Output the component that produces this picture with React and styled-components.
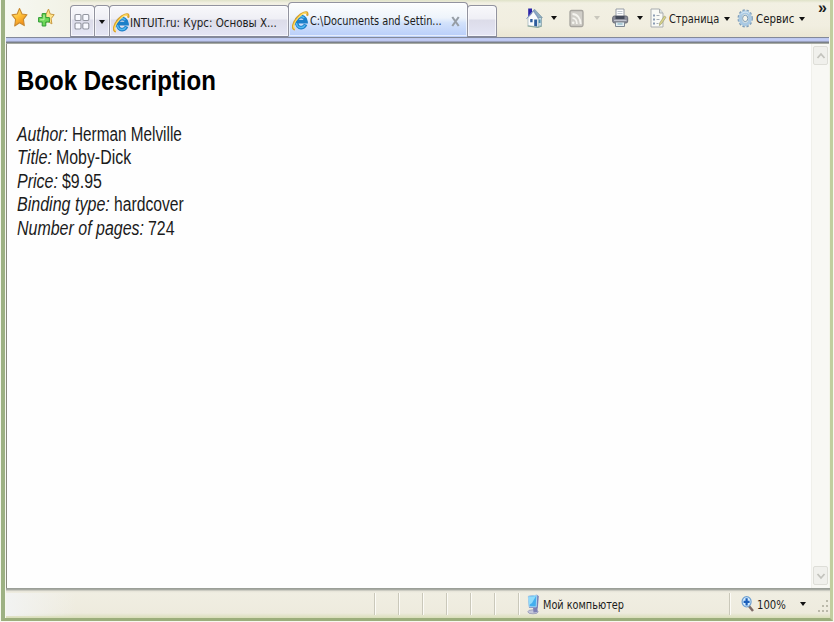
import React, { useLayoutEffect, useRef, useState } from 'react';
import styled, { createGlobalStyle } from 'styled-components';

const Global = createGlobalStyle`
  * { box-sizing: border-box; }
  body { margin: 0; background: #fff; overflow: hidden; }
`;

const Frame = styled.div`
  width: 834px; height: 622px; display: flex; flex-direction: column;
  padding: 0 1px 1px 1px; background: #f6f8ef;
  font-family: "DejaVu Sans Condensed", "DejaVu Sans", sans-serif; color: #1c1c20;
`;
const Border = styled.div`
  flex: 1; min-height: 0; display: flex; flex-direction: column;
  border-left: 4px solid #9db183; border-right: 3px solid #c1ce9f; border-bottom: 3px solid #9cae7c;
  padding-left: 1px;
`;
const CommandBar = styled.header`
  height: 37px; display: flex; flex: none;
  background: linear-gradient(#dfe2c8 0, #f2f0e3 3px, #f1eee0 26px, #ebe7d4);
`;
const Favorites = styled.div`
  width: 64px; display: flex; padding: 7px 0 0 5px; gap: 8px;
  background: linear-gradient(90deg, #f6f8f2, #f2f2e6);
  svg { flex: none; }
`;
const Tab = styled.div`
  width: ${p => p.$w}px; height: ${p => (p.$active ? 35 : 32)}px; margin: ${p => (p.$active ? 2 : 5)}px 0 0 ${p => (p.$overlap ? -1 : 0)}px;
  flex: none; display: flex; align-items: center; padding: ${p => p.$top || 0}px 0 0 ${p => p.$pad || 0}px;
  border: 1px solid #92939f; border-bottom-color: ${p => (p.$active ? '#bcd0f8' : '#85889a')};
  border-radius: 4px 4px 0 0;
  background: ${p => (p.$active
    ? 'linear-gradient(#fdfefe, #eef4fb 45%, #d3e2fb 60%, #b9cefa)'
    : 'linear-gradient(#f8f8fb, #efeff5 42%, #dcdce9 48%, #e5e6f5)')};
  box-shadow: inset 0 0 0 1px #ffffffa0;
`;
const Strip = styled.div`
  flex: none; height: 7px; margin-right: 1px;
  background: linear-gradient(#83899a 0 1px, #bec9ef 1px 2px, #c5cffa 3px, #b7c0e8 4px, #7e8594 5px, #777b7c 6px, #d7dbca 7px);
`;
const Commands = styled.div`
  flex: 1; display: flex; align-items: flex-start; padding: 8px 0 0 29px; position: relative;
  svg { flex: none; }
`;
const Gap = styled.i`flex: none; width: ${p => p.$w}px;`;
const Arrow = styled.i`
  flex: none; width: 0; height: 0; border: 3px solid transparent; border-bottom: 0;
  border-top: 4px solid ${p => (p.$dim ? '#c9c7bd' : '#111')}; margin-top: ${p => p.$top || 0}px;
`;
const More = styled.span`
  position: absolute; right: 3px; top: 0; font: bold 16px/16px "Liberation Sans", sans-serif;
`;
const Page = styled.main`
  flex: 1; min-height: 0; display: flex; background: #fefefe;
  border-left: 1px solid #888b7d;
`;
const Article = styled.article`
  flex: 1; padding: 21px 0 0 10px; font-family: "Liberation Sans", Arial, sans-serif;
`;
const Title = styled.h1`
  margin: 0 0 26px; height: 32px; font-size: 28px; line-height: 32px; color: #000;
`;
const Row = styled.div`
  height: 23.4px; line-height: 23.4px; font-size: 19.5px; display: flex; gap: 4px; color: #1b1b1b;
`;
const Label = styled.em`font-style: italic;`;
const ScrollTrack = styled.aside`
  width: 19px; display: flex; flex-direction: column; justify-content: space-between; align-items: flex-start;
  background: #f8f8f4; padding: 2px 0 3px 1px; border-left: 1px solid #f0f0eb; border-right: 1px solid #f3f5ea;
`;
const ScrollButton = styled.div`
  width: 15px; height: 19px; border: 1px solid #deded8; border-radius: 2px; background: #f0f0ec;
  display: flex; align-items: center; justify-content: center;
`;
const Status = styled.footer`
  flex: none; height: 30px; display: flex; align-items: center; padding-top: 2px;
  background: linear-gradient(#9b9f98 0 1px, #b3b5ad 2px, #e5e3d8 3px, #f0eee2 5px, #eeebde 25px, #d9deb9 30px);
`;
const Fade = styled.div`
  width: 368px; height: 23px; background: linear-gradient(90deg, #f2f3f2, #eeecdf00 70px);
`;
const Cell = styled.div`
  flex: none; height: 22px; width: ${p => p.$w}px; display: flex; align-items: center;
  padding-left: ${p => p.$pad || 0}px; border-left: 1px solid #cac8ba; box-shadow: inset 1px 0 #fcfbf6;
  svg { flex: none; }
`;
const FitBox = styled.span`
  display: block; flex: none; width: ${p => p.$w}px; white-space: nowrap; height: ${p => p.$h ? p.$h + 'px' : 'auto'};
  font-size: ${p => (p.$size ? p.$size + 'px' : 'inherit')};
  line-height: ${p => (p.$h ? p.$h + 'px' : 'inherit')};
  margin-top: ${p => p.$top || 0}px;
  & > span { display: inline-block; transform-origin: 0 50%; white-space: pre; }
`;

function Fit({ width, size, height, top, children }) {
  const ref = useRef(null);
  const [scale, setScale] = useState(1);
  useLayoutEffect(() => { setScale(width / ref.current.offsetWidth); }, [width, children]);
  return (
    <FitBox $w={width} $size={size} $h={height} $top={top}>
      <span ref={ref} style={{ transform: `scaleX(${scale})` }}>{children}</span>
    </FitBox>
  );
}

const Star = () => (
  <svg width="19" height="21" viewBox="0 0 19 21">
    <defs><linearGradient id="star" x2=".6" y2="1"><stop stopColor="#fff2a0" /><stop offset=".5" stopColor="#ffc43a" /><stop offset="1" stopColor="#f08a16" /></linearGradient></defs>
    <path d="M8.5 1.5 11 7l5 .7-3.6 4.7.9 6.2-4.8-2.9L3.7 19l.9-6.6L1 7.9 6.2 7Z" fill="url(#star)" stroke="#c88a30" strokeWidth="1.1" strokeLinejoin="round" />
  </svg>
);
const AddStar = () => (
  <svg width="19" height="21" viewBox="0 0 19 21">
    <path d="m10.5 2 1.7 5 4 .7-3.1 4 .8 5.2-4.1-2.5-4.4 2.5.9-5.5-2.6-3.4 4.5-1Z" fill="#ffe48a" stroke="#c99a42" strokeLinejoin="round" />
    <path d="M4.2 6.6h3.6v4h3.6v4.4H7.8v4H4.2v-4H.6v-4.4h3.6Z" fill="#6ed858" stroke="#2f9a35" strokeLinejoin="round" />
    <path d="M6 8.2v4.6H2.2" fill="none" stroke="#c0f3a7" />
  </svg>
);
const QuickTabs = () => (
  <svg width="17" height="18" viewBox="0 0 17 18" fill="#f8f9ff" stroke="#92959f" strokeWidth="1.1">
    <rect x="1" y="1.5" width="6" height="6" rx="1.2" /><rect x="8.8" y="1.5" width="6" height="6" rx="1.2" />
    <rect x="1" y="10" width="6" height="6" rx="1.2" /><rect x="8.8" y="10" width="6" height="6" rx="1.2" />
  </svg>
);
const Explorer = () => (
  <svg width="17" height="20" viewBox="0 0 17 20">
    <path d="M13.6 13.4A4.8 5.5 0 1 1 14 10.6H5.2" fill="none" stroke="#1c7fc9" strokeWidth="3.6" />
    <path d="M13 14.2A4.8 5.4 0 0 1 4.3 12M5 8.6c1-2.9 4.6-4.3 7.3-1.6" fill="none" stroke="#53baf0" strokeWidth="1.5" />
    <path d="M3 18.4C-.8 17.9 1 11.7 5.6 6.3 9.8 1.7 15 .2 15.4 2.4c.2.8 0 1.6-.4 2.4" fill="none" stroke="#dba32d" strokeWidth="2.2" />
    <path d="M3 17.9C0 16.5 2.4 11 6 7c3.7-4 7.4-5.6 8.8-4.7" fill="none" stroke="#ffe168" strokeWidth="1.1" />
  </svg>
);
const Home = () => (
  <svg width="18" height="21" viewBox="0 0 18 21">
    <path d="M2.2.6H6V7L2.2 9Z" fill="#2c24a8" />
    <path d="m8.5 1.2 7.8 8.3-1 1H11L7 3Z" fill="#8fadc0" stroke="#6f8f9f" strokeWidth=".6" />
    <path d="M11 9.5h4.5v8L11 19Z" fill="#c4dae2" stroke="#6d8b9a" strokeWidth=".6" />
    <path d="M2 9.8 7.5 3.5 12 10v9L2 17.6Z" fill="#fafcfd" stroke="#8fa5b4" strokeWidth=".6" />
    <path d="M.5 10.8 7.7 2.2l5 8.4" fill="none" stroke="#8098c4" strokeWidth="1" />
    <path d="M4.2 11h2.4v3.2H4.2ZM8.2 11.5H11v7l-2.8-.4Z" fill="#2c5c9d" /><path d="M12.7 11.5h1.8V15h-1.8Z" fill="#4f8ead" />
    <path d="m1.5 18 10.5 1.5 4-1.5" fill="none" stroke="#86a69a" />
  </svg>
);
const Feed = () => (
  <svg width="16" height="20" viewBox="0 0 16 20">
    <rect x="1" y="2.5" width="13" height="16" rx="1.5" fill="#d0cec8" stroke="#a6a49e" strokeWidth="1.3" />
    <path d="M3.5 6c4.6 0 8.2 4.5 8.2 10M3.5 10.1c2.6 0 4.4 2.6 4.4 5.9" fill="none" stroke="#f5f4ef" strokeWidth="1.8" /><circle cx="4.2" cy="14.8" r="1.3" fill="#f5f4ef" />
  </svg>
);
const Printer = () => (
  <svg width="17" height="20" viewBox="0 0 17 20">
    <path d="M4 1h8v8H4Z" fill="#fff" stroke="#969ca5" /><path d="M5.5 3.5h5M5.5 5.5h5" stroke="#c1c8d0" />
    <rect x=".7" y="8" width="15" height="7" rx="1.8" fill="#8a8c98" stroke="#666975" /><path d="M3.5 8h9v3h-9Z" fill="#444a59" /><path d="M2 12.4h12.5" stroke="#c5c9d5" />
    <path d="M3.5 14h9v4.5h-9Z" fill="#e4eef4" stroke="#7e8791" /><path d="M5.5 16h5" stroke="#74a9b8" />
  </svg>
);
const DocPage = () => (
  <svg width="17" height="21" viewBox="0 0 17 21">
    <path d="M1 1h8.5l3.5 4v14H1Z" fill="#f9faf6" stroke="#a9adaf" /><path d="M9.5 1v4H13" fill="#dce3e6" stroke="#a9adaf" />
    <path d="M3 6.5h2v2H3Zm0 4h2v2H3Zm0 4h2v2H3Z" fill="#8c9db5" /><path d="M6.5 7.5h3m-3 4h3m-3 4h2" stroke="#a6aeb6" />
    <path d="m14.3 8 1.7 1.2-4.6 6.8-2 1.6.3-2.6Z" fill="#dcd58a" stroke="#9fa174" strokeWidth=".7" />
  </svg>
);
const Gear = () => (
  <svg width="17" height="20" viewBox="0 0 17 20">
    <ellipse cx="8.2" cy="10.4" rx="6.5" ry="8" fill="none" stroke="#7f9db8" strokeWidth="2.4" strokeDasharray="2.2 1.7" />
    <ellipse cx="8.2" cy="10.4" rx="4.9" ry="6" fill="none" stroke="#a9c9e3" strokeWidth="3.6" />
    <ellipse cx="8.2" cy="10.4" rx="2.6" ry="3.2" fill="#f5f4ea" stroke="#7d9db8" /><path d="M4 6.4c2-3 6-3 8-.7" fill="none" stroke="#dcedf8" />
  </svg>
);
const Monitor = () => (
  <svg width="13" height="21" viewBox="0 0 13 21">
    <ellipse cx="6" cy="17.8" rx="5.2" ry="2" fill="#c4c6da" stroke="#8c90b2" strokeWidth=".7" />
    <path d="m6 13 4.5 1v4l-4 .6Z" fill="#7d80b4" /><path d="m1 2 9-1.2 1.8 1.5-1 12-8.8-.5Z" fill="#777eb6" />
    <path d="m1.3 2.4 8.5-1.2-.6 11.7-7-.2Z" fill="#42aeee" stroke="#a5d6f3" /><path d="m2 3 7-1-4 7-3 2Z" fill="#91dcfa" />
  </svg>
);
const Magnifier = () => (
  <svg width="14" height="18" viewBox="0 0 14 18">
    <path d="m7.5 10.5 4.5 5.5" stroke="#7d6a66" strokeWidth="2.5" /><ellipse cx="5.6" cy="6.8" rx="4.5" ry="5.2" fill="#d4edff" stroke="#6d9fd0" strokeWidth="1.2" />
    <path d="M5.6 3.2v7.2M2.6 6.8h6" stroke="#1b5fba" strokeWidth="2.2" />
  </svg>
);
const Chevron = ({ down }) => (
  <svg width="10" height="8" viewBox="0 0 10 8"><path d={down ? 'm1.5 2 3.5 4 3.5-4' : 'm1.5 6 3.5-4 3.5 4'} fill="none" stroke="#c3c3bd" strokeWidth="1.8" /></svg>
);
const CloseMark = () => (
  <svg width="9" height="11" viewBox="0 0 9 11"><path d="m1.3 1 6.4 9m0-9-6.4 9" stroke="#969da5" strokeWidth="2.1" /></svg>
);
const Grip = () => (
  <svg width="12" height="15" viewBox="0 0 12 15" fill="#bbb9aa"><path d="M9 3h2v2H9ZM5 8h2v2H5Zm4 0h2v2H9ZM1 13h2v2H1Zm4 0h2v2H5Zm4 0h2v2H9Z" /></svg>
);

const details = [
  ['Author:', 51, 'Herman Melville', 110],
  ['Title:', 35, 'Moby-Dick', 75],
  ['Price:', 41, '$9.95', 40],
  ['Binding type:', 93, 'hardcover', 70],
  ['Number of pages:', 127, '724', 27],
];

export default function App() {
  return (
    <Frame>
      <Global />
      <Border>
        <CommandBar>
          <Favorites><Star /><AddStar /></Favorites>
          <Tab $w={25} $pad={3} $top={1}><QuickTabs /></Tab>
          <Tab $w={16} $pad={4} $top={1} $overlap><Arrow /></Tab>
          <Tab $w={180} $pad={3} $top={3} $overlap><Explorer /><Fit width={147} size={12} height={20} top={1}>INTUIT.ru: Курс: Основы X...</Fit></Tab>
          <Tab $w={180} $active $pad={3} $top={3} $overlap><Explorer /><Gap $w={1} /><Fit width={132} size={12} height={20}>C:\Documents and Settin...</Fit><Gap $w={9} /><CloseMark /></Tab>
          <Tab $w={30} $overlap />
          <Commands>
            <Home /><Gap $w={7} /><Arrow $top={8} /><Gap $w={12} />
            <Feed /><Gap $w={9} /><Arrow $top={8} $dim /><Gap $w={12} />
            <Printer /><Gap $w={8} /><Arrow $top={8} /><Gap $w={7} />
            <DocPage /><Gap $w={2} /><Fit width={50} size={12} height={20} top={1}>Страница</Fit><Gap $w={5} /><Arrow $top={9} /><Gap $w={7} />
            <Gear /><Gap $w={2} /><Fit width={38} size={12} height={20} top={1}>Сервис</Fit><Gap $w={5} /><Arrow $top={9} />
            <More>»</More>
          </Commands>
        </CommandBar>
        <Strip />
        <Page>
          <Article>
            <Title><Fit width={199}>Book Description</Fit></Title>
            {details.map(([label, labelWidth, value, valueWidth]) => (
              <Row key={label}>
                <Label><Fit width={labelWidth}>{label}</Fit></Label>
                <Fit width={valueWidth}>{value}</Fit>
              </Row>
            ))}
          </Article>
          <ScrollTrack>
            <ScrollButton><Chevron /></ScrollButton>
            <ScrollButton><Chevron down /></ScrollButton>
          </ScrollTrack>
        </Page>
        <Status>
          <Fade />
          <Cell $w={24} /><Cell $w={24} /><Cell $w={24} /><Cell $w={24} /><Cell $w={24} /><Cell $w={24} />
          <Cell $w={211} $pad={8}><Monitor /><Gap $w={3} /><Fit width={81} size={12} height={20} top={1}>Мой компьютер</Fit></Cell>
          <Cell $w={100} $pad={11}><Magnifier /><Gap $w={2} /><Fit width={29} size={12} height={20} top={1}>100%</Fit><Gap $w={14} /><Arrow /><Gap $w={11} /><Grip /></Cell>
        </Status>
      </Border>
    </Frame>
  );
}
